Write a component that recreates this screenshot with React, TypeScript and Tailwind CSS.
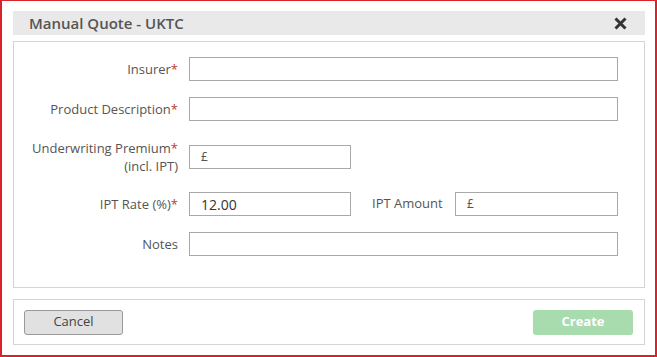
import React from "react";

const font = { fontFamily: '"Open Sans", "Noto Sans", sans-serif' };

function Label({ text, req, second }: { text: string; req?: boolean; second?: string }) {
  return (
    <div className="w-[164px] shrink-0 text-right text-[13px] leading-[18px] text-[#555]">
      <div>
        {text}
        {req && <span className="text-[#c0392b]">*</span>}
      </div>
      {second && <div>{second}</div>}
    </div>
  );
}

function Input({ w, prefix, value }: { w: string; prefix?: string; value?: string }) {
  return (
    <div className={`${w} h-[24px] border border-[#a9a9a9] bg-white flex items-center pl-[11px]`}>
      {prefix && <span className="text-[12px] text-[#555]">{prefix}</span>}
      {value && <span className="text-[14px] text-[#333]">{value}</span>}
    </div>
  );
}

export default function App() {
  return (
    <div
      style={font}
      className="w-[657px] h-[357px] bg-white border-t border-l-2 border-r-2 border-b-2 border-[#d9232a] pt-[10px] pl-[11px]"
    >
      <div className="w-[632px] h-[24px] bg-[#e9e9e9] flex items-center justify-between pl-[16px] pr-[18px]">
        <span className="text-[15px] font-semibold text-[#555]">Manual Quote - UKTC</span>
        <svg width="13" height="13" viewBox="0 0 13 13">
          <path d="M1.5 1.5 L11.5 11.5 M11.5 1.5 L1.5 11.5" stroke="#333" strokeWidth="3" />
        </svg>
      </div>
      <div className="w-[632px] h-[247px] mt-[6px] border border-[#d4d4d4] pt-[15px] flex flex-col">
        <div className="flex items-center h-[24px] gap-[11px]">
          <Label text="Insurer" req />
          <Input w="w-[429px]" />
        </div>
        <div className="flex items-center h-[24px] gap-[11px] mt-[16px]">
          <Label text="Product Description" req />
          <Input w="w-[429px]" />
        </div>
        <div className="flex items-center h-[36px] gap-[11px] mt-[18px]">
          <Label text="Underwriting Premium" req second="(incl. IPT)" />
          <Input w="w-[162px]" prefix="£" />
        </div>
        <div className="flex items-center h-[24px] gap-[11px] mt-[17px]">
          <Label text="IPT Rate (%)" req />
          <Input w="w-[162px]" value="12.00" />
          <span className="ml-[10px] text-[13px] text-[#555] w-[72px]">IPT Amount</span>
          <Input w="w-[163px]" prefix="£" />
        </div>
        <div className="flex items-center h-[24px] gap-[11px] mt-[16px]">
          <Label text="Notes" />
          <Input w="w-[429px]" />
        </div>
      </div>
      <div className="w-[632px] h-[46px] mt-[11px] border border-[#d4d4d4] flex items-center justify-between px-[10px]">
        <button className="w-[99px] h-[25px] bg-[#e1e1e1] border border-[#9a9a9a] rounded-[3px] text-[13px] text-[#444]">
          Cancel
        </button>
        <button className="w-[100px] h-[25px] bg-[#a8dcae] rounded-[3px] text-[13px] font-bold text-white mr-[1px]">
          Create
        </button>
      </div>
    </div>
  );
}
